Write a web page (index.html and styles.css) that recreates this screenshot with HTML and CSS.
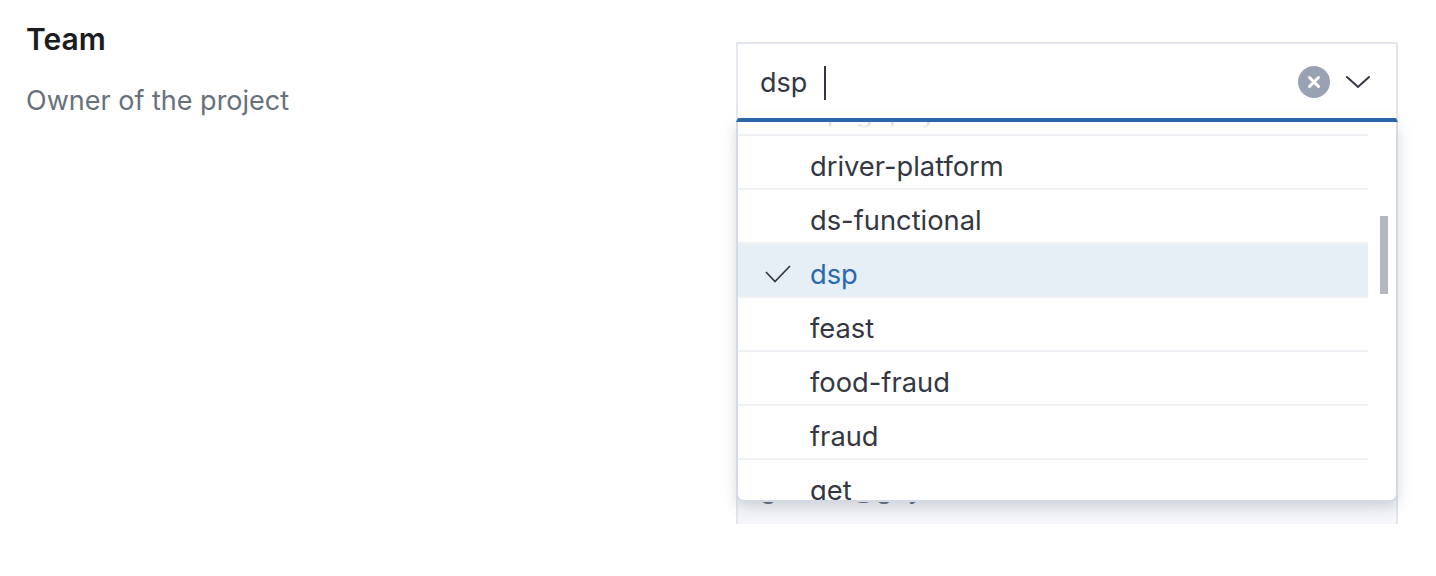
FILE: index.html
```html
<!DOCTYPE html>
<html lang="en">
<head>
    <meta charset="UTF-8">
    <title>Team</title>
    <link rel="stylesheet" href="styles.css">
</head>
<body>
    <div class="row">
        <div class="info">
            <h2 class="title">Team</h2>
            <p class="desc">Owner of the project</p>
        </div>
        <div class="field">
            <div class="select">
                <span class="value">dsp</span>
                <span class="caret"></span>
                <svg class="clear" width="32" height="32" viewBox="0 0 32 32">
                    <circle cx="16" cy="16" r="16" fill="#98a2b3"/>
                    <path d="M11.500 11.500L20.500 20.500M20.500 11.500L11.500 20.500" stroke="#fff" stroke-width="3" stroke-linecap="round"/>
                </svg>
                <svg class="arrow" width="26" height="16" viewBox="0 0 26 16">
                    <path d="M2 3L13 13L24 3" fill="none" stroke="#343741" stroke-width="2" stroke-linecap="round"/>
                </svg>
            </div>
            <div class="below">gofleet@goyek.co</div>
            <!-- dropdown lies over the field below -->
            <div class="menu">
                <ul class="list">
                    <li class="item">dp-gopay</li>
                    <li class="item">driver-platform</li>
                    <li class="item">ds-functional</li>
                    <li class="item active">
                        <svg class="check" width="28" height="22" viewBox="0 0 28 22">
                            <path d="M2 10L11 19.500L26 4" fill="none" stroke="#343741" stroke-width="1.700"/>
                        </svg>
                        dsp
                    </li>
                    <li class="item">feast</li>
                    <li class="item">food-fraud</li>
                    <li class="item">fraud</li>
                    <li class="item">get</li>
                </ul>
                <div class="thumb"></div>
            </div>
        </div>
    </div>
</body>
</html>
```

FILE: styles.css
```css
*{
    margin: 0;
    padding: 0;
    box-sizing: border-box;
}
body{
    font-family: Inter, "Liberation Sans", sans-serif;
    background-color: #fff;
    color: #343741;
}
.row{
    display: flex;
    justify-content: space-between;
    padding: 42px 38px 0 26px;
}
.info{
    margin-top: -22px;
}
.title{
    font-size: 30px;
    line-height: 38px;
    font-weight: 600;
    color: #1a1c21;
}
.desc{
    margin-top: 24px;
    font-size: 27px;
    line-height: 38px;
    color: #69707d;
}
/* right side, select and the field under it */
.field{
    width: 662px;
    height: 482px;
    position: relative;
}
.select{
    height: 80px;
    display: flex;
    align-items: center;
    padding: 2px 25px 0 22px;
    border: 2px solid #e4e7ee;
    border-bottom: 4px solid #2b69ad;
    background-color: #fff;
}
.value{
    font-size: 27px;
}
.caret{
    width: 2px;
    height: 34px;
    margin: 2px 0 0 17px;
    background-color: #343741;
    flex: none;
}
.clear{
    margin-left: auto;
}
.arrow{
    margin-left: 15px;
}
.below{
    height: 402px;
    padding: 348px 0 0 22px;
    font-size: 27px;
    line-height: 38px;
    color: #69707d;
    background-color: #f5f6f9;
    border-left: 2px solid #e4e7ee;
    border-right: 2px solid #e4e7ee;
    overflow: hidden;
}
.menu{
    position: absolute;
    left: 0;
    right: 0;
    top: 80px;
    height: 380px;
    background-color: #fff;
    border: 2px solid #d3dae6;
    border-top: none;
    border-radius: 0 0 8px 8px;
    box-shadow: 0 6px 12px rgba(65, 78, 101, 0.16), 0 2px 24px rgba(65, 78, 101, 0.06);
    overflow: hidden;
}
/* scroll fade on top of the list */
.menu::before{
    content: "";
    position: absolute;
    z-index: 1;
    left: 0;
    right: 0;
    top: 0;
    height: 8px;
    background: linear-gradient(rgba(255, 255, 255, 0.8), #fff);
}
.list{
    list-style: none;
    width: 630px;
    margin-top: -40px;
}
.item{
    height: 54px;
    padding: 8px 0 0 72px;
    display: flex;
    align-items: center;
    position: relative;
    font-size: 27.3px;
    color: #343741;
    border-bottom: 2px solid #eef0f4;
}
.item.active{
    color: #2b69ad;
    background-color: #e6eef6;
}
.check{
    position: absolute;
    left: 26px;
    top: 18px;
}
.thumb{
    position: absolute;
    left: 642px;
    top: 94px;
    width: 8px;
    height: 78px;
    background-color: #b4b7bf;
}
```
